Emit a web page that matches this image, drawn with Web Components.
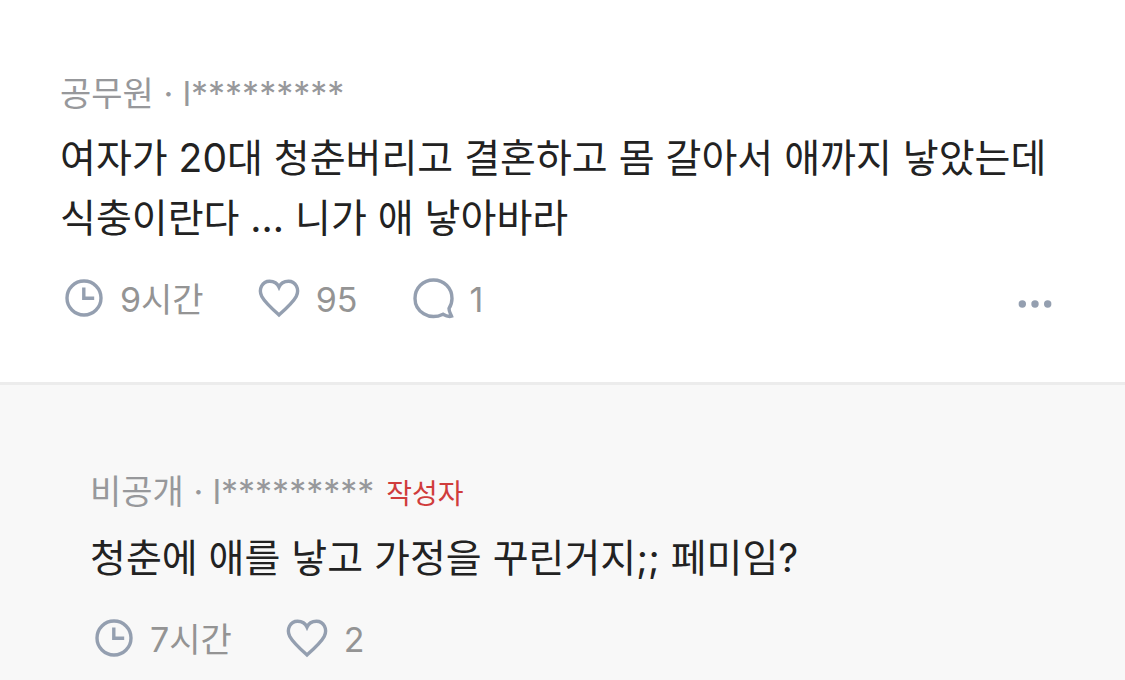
<!DOCTYPE html>
<html lang="ko">
<head>
<meta charset="utf-8">
<meta name="viewport" content="width=device-width, initial-scale=1">
<title>댓글</title>
<style>
body { margin: 0; background: #fff; font-family: Inter, "Noto Sans CJK KR", sans-serif; color: #222; }
</style>
</head>
<body>
<comment-thread>
  <comment-item>
    <comment-author slot="author" group="공무원" name="l*********"></comment-author>
    여자가 20대 청춘버리고 결혼하고 몸 갈아서 애까지 낳았는데 식충이란다 ... 니가 애 낳아바라
    <comment-action slot="actions" icon="clock">9시간</comment-action>
    <comment-action slot="actions" icon="heart" label="좋아요">95</comment-action>
    <comment-action slot="actions" icon="bubble" label="댓글">1</comment-action>
    <more-button slot="more"></more-button>
  </comment-item>
  <comment-item reply>
    <comment-author slot="author" group="비공개" name="l*********">작성자</comment-author>
    청춘에 애를 낳고 가정을 꾸린거지;; 페미임?
    <comment-action slot="actions" icon="clock">7시간</comment-action>
    <comment-action slot="actions" icon="heart" label="좋아요">2</comment-action>
  </comment-item>
</comment-thread>
<script>
const mount = (el, html) => { el.attachShadow({ mode: "open" }).innerHTML = html; };

const icons = {
  clock: '<circle cx="24" cy="20" r="17"/><path d="M23.8 9.5v10.7h10.4"/>',
  heart: '<path d="M23 37 C18 32.5 9 24.5 5.8 18.5 C2 11 6.5 3.2 13.5 3.2 C18 3.2 21.5 5.5 23 9 C24.5 5.5 28 3.2 32.5 3.2 C39.5 3.2 44 11 40.2 18.5 C37 24.5 28 32.5 23 37Z"/>',
  bubble: '<path d="M34 36.2 C20 43 6 33.5 6 20.5 C6 10 14 2 24.5 2 C35 2 43 10 43 20.5 C43 24.5 42 27.5 40 30.5 C40 33.5 41.5 35.5 42.5 38.2 C39.5 39 37 38 34 36.2Z"/>'
};

customElements.define("comment-thread", class extends HTMLElement {
  constructor() {
    super();
    mount(this, `<style>
      :host { display: flex; flex-direction: column; min-height: 100vh; }
      ::slotted(:last-child) { flex: 1; }
    </style><slot></slot>`);
  }
});

customElements.define("comment-item", class extends HTMLElement {
  constructor() {
    super();
    mount(this, `<style>
      :host { display: block; box-sizing: border-box; padding: 72px 60px 60px; }
      :host([reply]) { padding: 85px 60px 16px 90px; background: #f8f8f8; border-top: 3px solid #ececec; }
      p { margin: 12px 0 30px; font-size: 39px; line-height: 60px; word-break: keep-all; overflow-wrap: anywhere; }
      footer { display: flex; align-items: center; justify-content: space-between; }
      .actions { display: flex; flex-wrap: wrap; gap: 0 52px; }
    </style>
    <article>
      <header><slot name="author"></slot></header>
      <p><slot></slot></p>
      <footer><div class="actions"><slot name="actions"></slot></div><slot name="more"></slot></footer>
    </article>`);
  }
});

customElements.define("comment-author", class extends HTMLElement {
  constructor() {
    super();
    mount(this, `<style>
      :host { display: flex; align-items: baseline; gap: 12px; color: #97989b; font-size: 34px; line-height: 44px; }
      .badge { color: #d03c3c; font-size: 28px; }
    </style><span class="id"></span><span class="badge"><slot></slot></span>`);
    this.shadowRoot.querySelector(".id").textContent =
      this.getAttribute("group") + " · " + this.getAttribute("name");
  }
});

customElements.define("comment-action", class extends HTMLElement {
  constructor() {
    super();
    const label = this.getAttribute("label");
    const body = `<svg width="48" height="44" viewBox="0 0 48 44" aria-hidden="true">${icons[this.getAttribute("icon")]}</svg><span><slot></slot></span>`;
    mount(this, `<style>
      :host { display: block; color: #949494; font-size: 34px; line-height: 44px; }
      .row { display: flex; align-items: center; gap: 12px; margin: 0; padding: 0; border: 0; background: none; font: inherit; color: inherit; }
      button { cursor: pointer; }
      svg { display: block; fill: none; stroke: #949fb0; stroke-width: 3.4; }
    </style>${label ? `<button class="row" type="button" title="${label}">${body}</button>` : `<div class="row">${body}</div>`}`);
  }
});

customElements.define("more-button", class extends HTMLElement {
  constructor() {
    super();
    mount(this, `<style>
      :host { display: block; }
      button { display: block; margin: 0; padding: 0; border: 0; background: none; cursor: pointer; }
      svg { display: block; fill: #949fb0; }
    </style>
    <button type="button" aria-label="더보기"><svg width="60" height="44" viewBox="0 0 60 44" aria-hidden="true"><circle cx="17.3" cy="26" r="3.7"/><circle cx="30" cy="26" r="3.7"/><circle cx="42.7" cy="26" r="3.7"/></svg></button>`);
  }
});
</script>
</body>
</html>
